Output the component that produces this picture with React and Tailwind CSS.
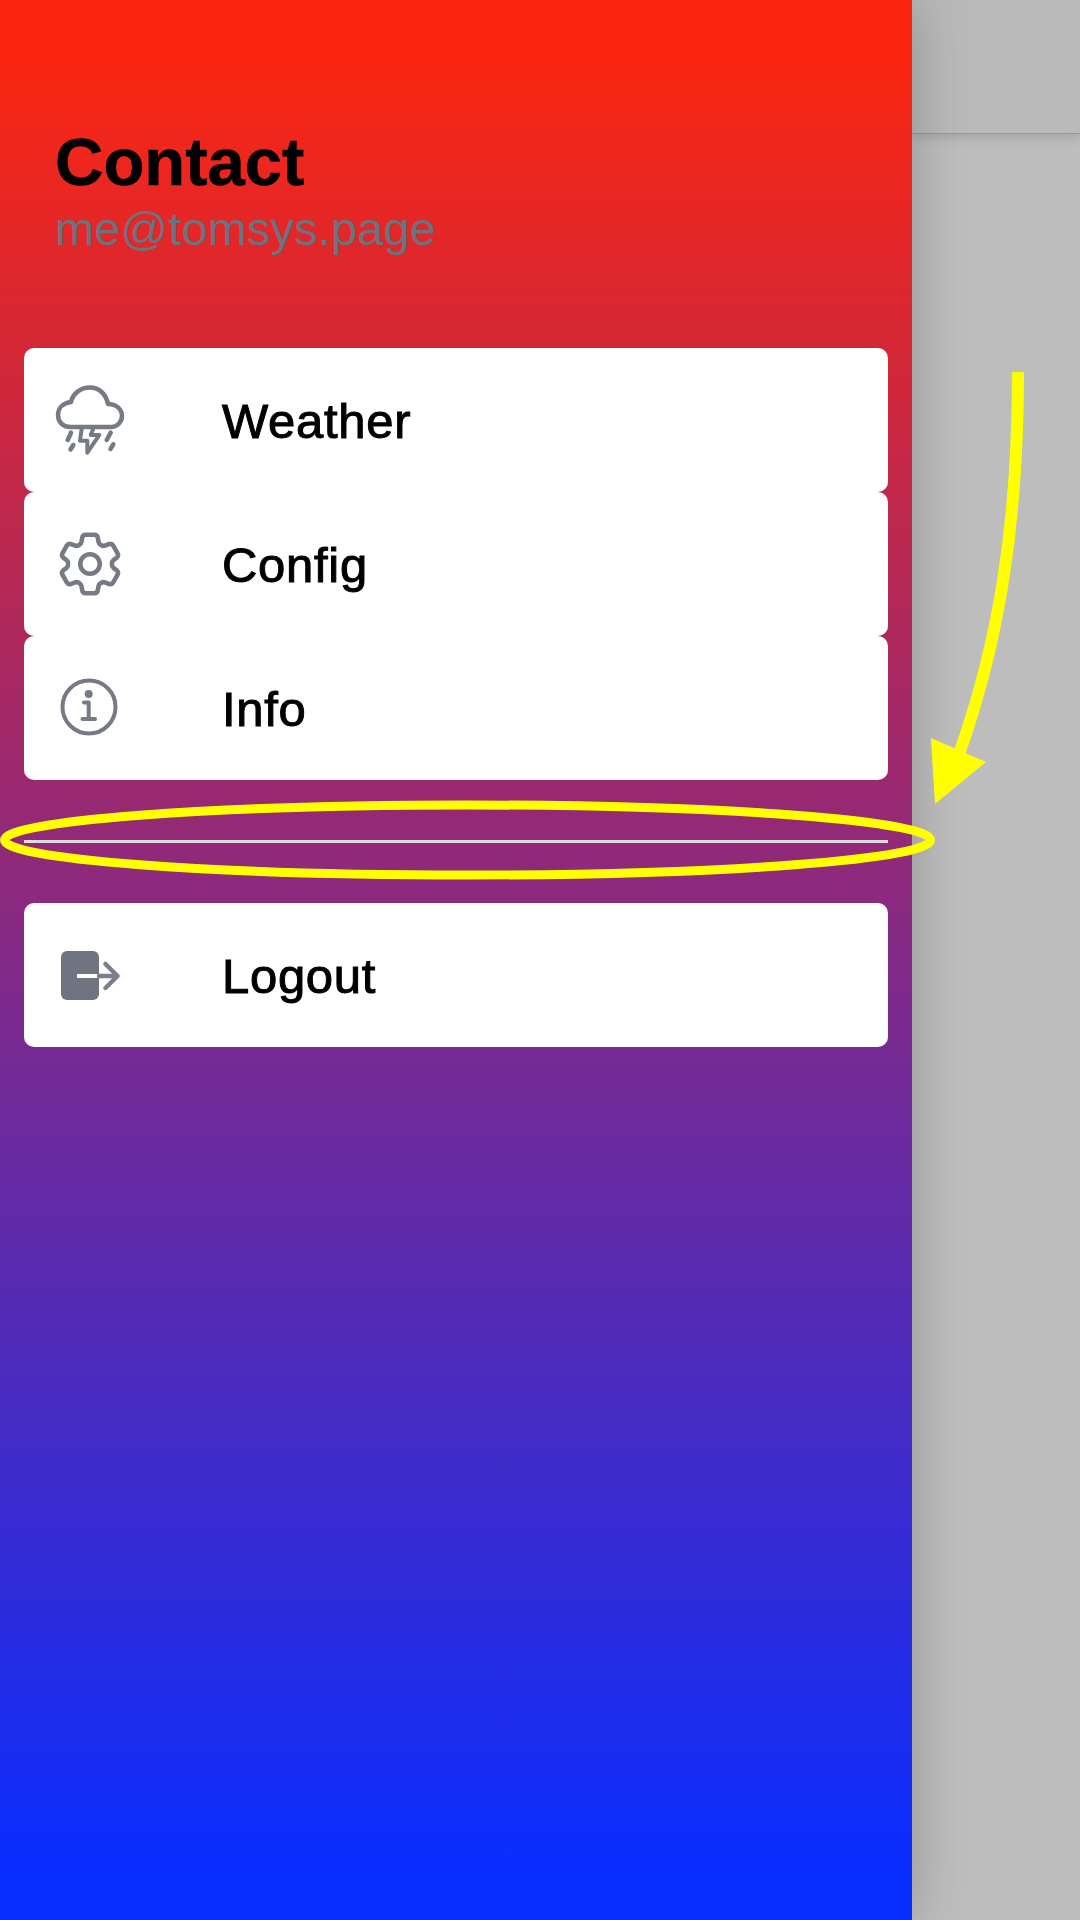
import { HiOutlineCog6Tooth } from "react-icons/hi2";

function StormIcon() {
  return (
    <svg viewBox="0 0 72 72" className="w-[72px] h-[72px] text-[#757a85]" fill="none" stroke="currentColor" strokeWidth="4.5" strokeLinecap="round" strokeLinejoin="round">
      <path d="M16 43C9 43 4 38 4 31C4 24 9 19 17 18C19 9 27 3.5 36 3.5C45 3.5 52 10 54 20C62 20 68 25 68 32C68 38 63 43 57 43Z" />
      <path strokeWidth="4" d="M27.7 44.5L26 56.7H33.3V68.7L45.3 51H36.7L39.3 44.5" />
      <path strokeWidth="4.5" d="M17 48.7L13.7 56M19.3 61L16.5 65.5M56.7 48.7L52.7 56M59.3 60.3L56.5 65" />
    </svg>
  );
}

function InfoIcon() {
  return (
    <svg viewBox="0 0 72 72" className="w-[72px] h-[72px] text-[#757a85]" fill="none" stroke="currentColor" strokeWidth="4" strokeLinecap="round" strokeLinejoin="round">
      <circle cx="35" cy="35" r="26.5" />
      <circle cx="34.7" cy="22" r="4" fill="currentColor" stroke="none" />
      <path d="M30 30.5H34.7V47M28.5 47H41" />
    </svg>
  );
}

function LogoutIcon() {
  return (
    <svg viewBox="0 0 72 72" className="w-[72px] h-[72px]" fill="none">
      <rect x="7" y="12" width="38" height="49" rx="6" fill="#6f7480" />
      <path d="M23 37H45" stroke="#fff" strokeWidth="4" />
      <path d="M45 37H63M51.5 25L63.5 37L51.5 49" stroke="#7a7f8a" strokeWidth="4.5" strokeLinecap="round" strokeLinejoin="round" />
    </svg>
  );
}

function MenuCard({ icon, label }) {
  return (
    <div className="h-[144px] bg-white rounded-[10px] flex items-center pl-[30px]">
      <div className="w-[72px] flex justify-center">{icon}</div>
      <span className="ml-[96px] pt-[2px] text-[49px] leading-none tracking-[0.7px] text-black [-webkit-text-stroke:1px_black]">{label}</span>
    </div>
  );
}

export default function App() {
  return (
    <div className="relative w-[1080px] h-[1920px] overflow-hidden flex bg-[#bdbdbd] [font-family:'Liberation_Sans',sans-serif]">
      {/* Drawer */}
      <aside className="relative z-10 w-[912px] h-full flex flex-col px-[24px] bg-linear-to-b/srgb from-[#fb2610] from-[3%] to-[#0a2dff] to-[97%] shadow-[0_0_50px_rgba(0,0,0,0.22)]">
        <div className="pl-[31px] pt-[124px] h-[348px]">
          <h1 className="text-[67px] leading-[76px] font-bold text-black [-webkit-text-stroke:0.5px_black]">Contact</h1>
          <p className="mt-[2px] text-[47px] leading-[54px] tracking-[0.1px] text-[#6b7280]">me@tomsys.page</p>
        </div>
        <MenuCard label="Weather" icon={<StormIcon />} />
        <MenuCard label="Config" icon={<HiOutlineCog6Tooth strokeWidth={1.4} className="w-[78px] h-[78px] shrink-0 text-[#757a85]" />} />
        <MenuCard label="Info" icon={<InfoIcon />} />
        <hr className="mt-[60px] mb-[60px] h-[3px] border-0 bg-[#dcdcdc]" />
        <MenuCard label="Logout" icon={<LogoutIcon />} />
      </aside>

      {/* Dimmed page behind the drawer */}
      <div className="flex-1 flex flex-col">
        <div className="h-[134px] bg-[#b9b9b9] border-b border-[#9a9a9a] shadow-[0_4px_10px_rgba(0,0,0,0.12)]" />
      </div>

      {/* Yellow annotation */}
      <svg className="absolute inset-0 z-20 w-[1080px] h-[1920px] pointer-events-none" viewBox="0 0 1080 1920" fill="none">
        <ellipse cx="467.5" cy="840" rx="463" ry="35" stroke="#ffff00" strokeWidth="9" />
        <path d="M1018 372C1018 520 1000 640 958 757" stroke="#ffff00" strokeWidth="12" />
        <path d="M931 738L986 762L935 804Z" fill="#ffff00" />
      </svg>
    </div>
  );
}
